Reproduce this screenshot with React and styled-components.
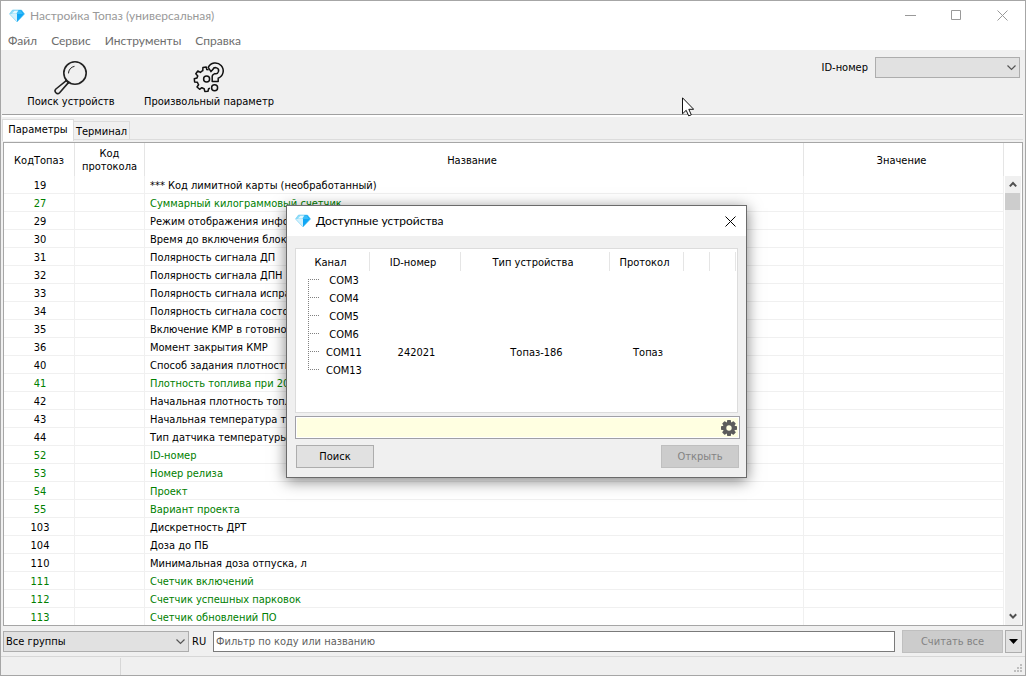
import React from "react";
import styled, { createGlobalStyle } from "styled-components";

const GlobalStyle = createGlobalStyle`
  * {
    box-sizing: border-box;
  }
  body {
    margin: 0;
    background: #f0f0f0;
  }
  body, button, input, select, table {
    font-family: "DejaVu Sans Condensed", "DejaVu Sans", Tahoma, sans-serif;
    font-size: 11px;
    line-height: 13px;
    color: #000;
  }
  button {
    padding: 0;
    margin: 0;
    border: none;
    background: none;
  }
`;

const Window = styled.div`
  position: relative;
  display: flex;
  flex-direction: column;
  height: 100vh;
  border: 1px solid #a6a6a6;
  background: #f0f0f0;
  overflow: hidden;
`;

const TitleBar = styled.header`
  display: flex;
  align-items: center;
  flex: none;
  height: ${(props) => (props.$dialog ? "30px" : "29px")};
  padding-left: 8px;
  background: #fff;
`;

const Title = styled.h1`
  flex: 1;
  margin: 0 0 0 5px;
  font: 12px/16px Lato, "Open Sans", sans-serif;
  color: ${(props) => (props.$active ? "#000" : "#999")};
`;

const WindowButton = styled.button`
  display: flex;
  align-items: center;
  justify-content: center;
  width: ${(props) => (props.$small ? "32px" : "46px")};
  height: 29px;
  color: ${(props) => (props.$small ? "#000" : "#999")};
`;

const MenuBar = styled.nav`
  display: flex;
  flex: none;
  gap: 14px;
  height: 20px;
  padding: 2px 0 0 7px;
  background: #fff;
`;

const MenuItem = styled.button`
  font: 12px/18px Lato, "Open Sans", sans-serif;
  color: #6d6d6d;
`;

const Toolbar = styled.div`
  display: flex;
  align-items: flex-start;
  flex: none;
  height: 67px;
  margin: 0 2px 0 1px;
  border-bottom: 2px solid #fff;
  box-shadow: inset 0 -1px 0 #a0a0a0;
`;

const ToolButton = styled.button`
  display: flex;
  flex-direction: column;
  align-items: center;
  width: 138px;
  padding-top: 11px;
`;

const DeviceField = styled.label`
  display: flex;
  align-items: center;
  gap: 7px;
  margin: 7px 3px 0 auto;
`;

const SelectBox = styled.span`
  position: relative;
  display: block;
  width: ${(props) => props.$width};
  height: 21px;

  svg {
    position: absolute;
    top: 7px;
    right: 4px;
    pointer-events: none;
  }
`;

const Select = styled.select`
  width: 100%;
  height: 21px;
  padding: 0 20px 0 2px;
  border: 1px solid #adadad;
  border-radius: 0;
  background: #e1e1e1;
  appearance: none;
`;

const Tabs = styled.div`
  display: flex;
  align-items: flex-end;
  flex: none;
  height: 25px;
  margin: 0 2px 0 1px;
  box-shadow: inset 0 -2px 0 #f0f0f0, inset 0 -3px 0 #dcdcdc;
`;

const Tab = styled.button`
  height: ${(props) => (props.$active ? "22px" : "19px")};
  margin-bottom: ${(props) => (props.$active ? "1px" : "2px")};
  width: ${(props) => (props.$active ? "72px" : "56px")};
  padding: ${(props) => (props.$active ? "0 0 2px" : "2px 0 0")};
  border: 1px solid #dcdcdc;
  border-left-width: ${(props) => (props.$active ? "1px" : "0")};
  border-bottom: ${(props) => (props.$active ? "none" : "1px solid #dcdcdc")};
  background: ${(props) => (props.$active ? "#fff" : "#f0f0f0")};
`;

const GridPane = styled.main`
  display: flex;
  flex: 1;
  min-height: 0;
  margin: 0 2px;
  border: 1px solid #a6a6a6;
  background: #fff;
  overflow: hidden;
`;

const GridScroller = styled.div`
  flex: 1;
  min-width: 0;
  overflow: hidden;
`;

const ParamTable = styled.table`
  width: 100%;
  table-layout: fixed;
  border-collapse: separate;
  border-spacing: 0;
`;

const Th = styled.th`
  width: ${(props) => props.$width};
  height: 33px;
  padding: ${(props) => (props.$code ? "1px 0 0" : "1px 4px 0 0")};
  border-right: 1px solid #e5e5e5;
  font-weight: normal;
  text-align: center;
`;

const Td = styled.td`
  height: 18px;
  padding: ${(props) => (props.$left ? "1px 0 0 5px" : "1px 0 0 2px")};
  border-right: 1px solid #f0f0f0;
  border-bottom: 1px solid #f0f0f0;
  color: ${(props) => (props.$readonly ? "#008000" : "#000")};
  text-align: ${(props) => (props.$left ? "left" : "center")};
  white-space: nowrap;
  overflow: hidden;
`;

const ScrollBar = styled.div`
  display: flex;
  flex-direction: column;
  width: 16px;
  margin: 33px 1px 0 1px;
  background: #f0f0f0;
`;

const ScrollArrow = styled.button`
  display: flex;
  align-items: center;
  justify-content: center;
  height: 17px;
`;

const ScrollThumb = styled.div`
  width: 15px;
  height: 17px;
  margin-bottom: auto;
  background: #cdcdcd;
`;

const FilterBar = styled.form`
  display: flex;
  align-items: center;
  flex: none;
  height: 30px;
  padding: 0 3px 0 2px;
`;

const FilterLabel = styled.label`
  width: 24px;
  padding-left: 3px;
`;

const FilterInput = styled.input`
  flex: 1;
  min-width: 0;
  height: 21px;
  margin-right: 7px;
  padding: 0 2px;
  border: 1px solid #7a7a7a;
  border-radius: 0;
  background: #fff;

  &::placeholder {
    color: #5f5f5f;
    opacity: 1;
  }
`;

const PushButton = styled.button`
  display: flex;
  align-items: center;
  justify-content: center;
  width: ${(props) => props.$width};
  height: 23px;
  border: 1px solid #adadad;
  background: #e1e1e1;

  &:disabled {
    border-color: #bfbfbf;
    background: #ccc;
    color: #838383;
  }

  & + & {
    margin-left: 2px;
  }
`;

const StatusBar = styled.footer`
  display: flex;
  align-items: flex-end;
  flex: none;
  height: 19px;
  border-top: 1px solid #d7d7d7;
`;

const StatusPanel = styled.div`
  width: 120px;
  height: 17px;
  margin-right: auto;
  border-right: 1px solid #d7d7d7;
`;

const Dialog = styled.section`
  position: absolute;
  top: 204px;
  left: 285px;
  width: 461px;
  border: 1px solid #6b6b6b;
  background: #f0f0f0;
  box-shadow: 0 3px 14px rgba(0, 0, 0, 0.5);
`;

const DialogBody = styled.div`
  padding: 12px 6px 9px 8px;
`;

const DeviceList = styled.div`
  height: 165px;
  margin-right: 2px;
  padding: 3px 1px 0 0;
  border: 1px solid #dcdcdc;
  background: #fff;
`;

const DeviceTable = styled(ParamTable)`
  td {
    height: 18px;
    padding: 0 0 0 2px;
    text-align: center;
  }
`;

const DeviceTh = styled(Th)`
  height: 19px;
  padding: 2px 4px 0 0;
`;

const Channel = styled.div`
  display: flex;
  align-items: center;
  padding: 0 2px 0 8px;
`;

const ChannelName = styled.span`
  flex: 1;
`;

const AddressRow = styled.div`
  display: flex;
  align-items: center;
  height: 23px;
  margin: 3px 0 6px;
  padding: 1px;
  border: 1px solid #a0a0a6;
  background: #fff;
`;

const AddressInput = styled.input`
  flex: 1;
  min-width: 0;
  height: 19px;
  border: none;
  outline: none;
  background: transparent;
`;

const AddressInner = styled.div`
  display: flex;
  align-items: center;
  flex: 1;
  height: 19px;
  padding-right: 1px;
  background: #ffffe1;
`;

const IconButton = styled.button`
  display: flex;
`;

const DialogButtons = styled.div`
  display: flex;
  justify-content: space-between;
  padding: 0 1px;
`;

const Cursor = styled.svg`
  position: absolute;
  top: 96px;
  left: 681px;
`;

const Logo = () => (
  <svg width="16" height="14" viewBox="0 0 16 14" aria-hidden="true">
    <path d="M3.5 1h9L15.5 5 8 13 .5 5z" fill="#d3f1fd" />
    <path d="M3.5 1h9L15.5 5H.5z" fill="#8edcf8" />
    <path d="M5.5 1.8h4L7 4.4H3z" fill="#e6f8ff" />
    <path d="M9.5 1h3L15.5 5 8 13V5z" fill="#0fa6f5" />
    <path d="M9 2h3l2 3H8z" fill="#39bdf9" />
    <path d="M3.5 1h9L15.5 5 8 13 .5 5z" fill="none" stroke="#6bcdf4" strokeWidth=".6" />
  </svg>
);

const CloseIcon = () => (
  <svg width="11" height="11" viewBox="0 0 11 11" aria-hidden="true">
    <path d="M.5.5l10 10M10.5.5l-10 10" stroke="currentColor" fill="none" />
  </svg>
);

const Chevron = () => (
  <svg width="9" height="7" viewBox="0 0 9 7" aria-hidden="true">
    <path d="M.5 1.5l4 4 4-4" stroke="#555" strokeWidth="1.2" fill="none" />
  </svg>
);

const SearchIcon = () => (
  <svg width="34" height="34" viewBox="0 0 34 34" fill="none" stroke="#222" aria-hidden="true">
    <circle cx="21" cy="12" r="11.2" strokeWidth="1.6" />
    <path d="M14.5 12a6.7 6.7 0 0 1 5.6-6.6" strokeWidth="1" strokeLinecap="round" />
    <path
      d="M12.6 19.4L1.9 28a2.5 2.5 0 0 0 3.7 3.7L14.6 21.4"
      strokeWidth="1.6"
      strokeLinejoin="round"
    />
    <path d="M11.4 18.8l3.6 3.8" strokeWidth="1.4" />
  </svg>
);

const GearQuestionIcon = () => (
  <svg width="34" height="34" viewBox="0 0 34 34" fill="none" stroke="#111" strokeWidth="1.5" strokeLinejoin="round" aria-hidden="true">
    <path d="M16.6 8.8L14.8 8.6 14.2 6 10.9 6.6 10.8 9.7A9 9 0 0 0 8.4 11.4L5.8 10 3.8 12.7 5.8 14.9A9 9 0 0 0 5 17L2.3 17.8 2.6 21 5.4 21.3A9 9 0 0 0 6.6 23.7L5 26 7.6 28.3 9.8 26.7A9 9 0 0 0 12.2 27.8L12.8 30.4 16 30.3 16.6 27.8 18 27.3" />
    <circle cx="14.6" cy="18" r="3" />
    <path d="M16.2 6.4A7.9 7.9 0 1 1 26.2 17.2V20.6H20.2V15.6Q20.2 13.6 22.8 12.6A3 3 0 1 0 20.8 8.6L19 10.6 16.2 6.4Z" />
    <circle cx="22.6" cy="26.8" r="3" />
  </svg>
);

const CogIcon = () => (
  <svg width="16" height="16" viewBox="0 0 16 16" fill="#5c5c5c" aria-hidden="true">
    {[0, 45, 90, 135].map((angle) => (
      <rect key={angle} x="6" y="0" width="4" height="16" rx=".8" transform={`rotate(${angle} 8 8)`} />
    ))}
    <circle cx="8" cy="8" r="6.2" />
    <circle cx="8" cy="8" r="2.7" fill="#ffffe1" />
  </svg>
);

const ScrollIcon = ({ down }) => (
  <svg width="8" height="7" viewBox="0 0 8 7" aria-hidden="true">
    <path d={down ? "M.8 1.2L4 4.6 7.2 1.2" : "M.8 5.4L4 2 7.2 5.4"} stroke="#505050" strokeWidth="2" fill="none" />
  </svg>
);

// dotted connector to the left of a port name
const TreeBranch = ({ first, last }) => (
  <svg width="14" height="18" viewBox="0 0 14 18" stroke="#808080" strokeDasharray="1 1" aria-hidden="true">
    <path d={`M2.5 ${first ? 8 : 0}V${last ? 9 : 18}`} />
    <path d="M2 8.5H14" />
  </svg>
);

const params = [
  ["19", "*** Код лимитной карты (необработанный)"],
  ["27", "Суммарный килограммовый счетчик", true],
  ["29", "Режим отображения информации"],
  ["30", "Время до включения блокировки"],
  ["31", "Полярность сигнала ДП"],
  ["32", "Полярность сигнала ДПН"],
  ["33", "Полярность сигнала исправности"],
  ["34", "Полярность сигнала состояния"],
  ["35", "Включение КМР в готовности"],
  ["36", "Момент закрытия КМР"],
  ["40", "Способ задания плотности"],
  ["41", "Плотность топлива при 20 °C", true],
  ["42", "Начальная плотность топлива"],
  ["43", "Начальная температура топлива"],
  ["44", "Тип датчика температуры"],
  ["52", "ID-номер", true],
  ["53", "Номер релиза", true],
  ["54", "Проект", true],
  ["55", "Вариант проекта", true],
  ["103", "Дискретность ДРТ"],
  ["104", "Доза до ПБ"],
  ["110", "Минимальная доза отпуска, л"],
  ["111", "Счетчик включений", true],
  ["112", "Счетчик успешных парковок", true],
  ["113", "Счетчик обновлений ПО", true],
];

const devices = [
  { port: "COM3" },
  { port: "COM4" },
  { port: "COM5" },
  { port: "COM6" },
  { port: "COM11", id: "242021", type: "Топаз-186", protocol: "Топаз" },
  { port: "COM13" },
];

const DeviceDialog = () => (
  <Dialog role="dialog" aria-labelledby="dialog-title">
    <TitleBar $dialog>
      <Logo />
      <Title as="h2" id="dialog-title" $active>
        Доступные устройства
      </Title>
      <WindowButton $small aria-label="Закрыть">
        <CloseIcon />
      </WindowButton>
    </TitleBar>
    <DialogBody>
      <DeviceList>
        <DeviceTable>
          <thead>
            <tr>
              <DeviceTh $width="74px">Канал</DeviceTh>
              <DeviceTh $width="91px">ID-номер</DeviceTh>
              <DeviceTh>Тип устройства</DeviceTh>
              <DeviceTh $width="74px">Протокол</DeviceTh>
              <DeviceTh $width="26px" />
              <DeviceTh $width="26px" />
            </tr>
          </thead>
          <tbody>
            {devices.map((device, i) => (
              <tr key={device.port}>
                <td>
                  <Channel>
                    <TreeBranch first={i === 0} last={i === devices.length - 1} />
                    <ChannelName>{device.port}</ChannelName>
                  </Channel>
                </td>
                <td>{device.id}</td>
                <td>{device.type}</td>
                <td>{device.protocol}</td>
                <td />
                <td />
              </tr>
            ))}
          </tbody>
        </DeviceTable>
      </DeviceList>
      <AddressRow>
        <AddressInner>
          <AddressInput aria-label="Состояние поиска" />
          <IconButton aria-label="Настройки">
            <CogIcon />
          </IconButton>
        </AddressInner>
      </AddressRow>
      <DialogButtons>
        <PushButton $width="78px">Поиск</PushButton>
        <PushButton $width="78px" disabled>
          Открыть
        </PushButton>
      </DialogButtons>
    </DialogBody>
  </Dialog>
);

export default function App() {
  return (
    <>
      <GlobalStyle />
      <Window>
        <TitleBar>
          <Logo />
          <Title>Настройка Топаз (универсальная)</Title>
          <WindowButton aria-label="Свернуть">
            <svg width="11" height="11" aria-hidden="true">
              <path d="M0 5.5h11" stroke="currentColor" />
            </svg>
          </WindowButton>
          <WindowButton aria-label="Развернуть">
            <svg width="11" height="11" aria-hidden="true">
              <path d="M.5.5h9v9h-9z" stroke="currentColor" fill="none" />
            </svg>
          </WindowButton>
          <WindowButton aria-label="Закрыть">
            <CloseIcon />
          </WindowButton>
        </TitleBar>
        <MenuBar>
          <MenuItem>Файл</MenuItem>
          <MenuItem>Сервис</MenuItem>
          <MenuItem>Инструменты</MenuItem>
          <MenuItem>Справка</MenuItem>
        </MenuBar>
        <Toolbar>
          <ToolButton>
            <SearchIcon />
            Поиск устройств
          </ToolButton>
          <ToolButton>
            <GearQuestionIcon />
            Произвольный параметр
          </ToolButton>
          <DeviceField>
            ID-номер
            <SelectBox $width="145px">
              <Select />
              <Chevron />
            </SelectBox>
          </DeviceField>
        </Toolbar>
        <Tabs role="tablist">
          <Tab role="tab" aria-selected="true" $active>
            Параметры
          </Tab>
          <Tab role="tab" aria-selected="false">
            Терминал
          </Tab>
        </Tabs>
        <GridPane>
          <GridScroller>
            <ParamTable>
              <thead>
                <tr>
                  <Th $width="71px" $code>
                    КодТопаз
                  </Th>
                  <Th $width="70px" $code>
                    Код протокола
                  </Th>
                  <Th>Название</Th>
                  <Th $width="200px">Значение</Th>
                </tr>
              </thead>
              <tbody>
                {params.map(([code, name, readonly]) => (
                  <tr key={code}>
                    <Td $readonly={readonly}>{code}</Td>
                    <Td />
                    <Td $left $readonly={readonly}>
                      {name}
                    </Td>
                    <Td />
                  </tr>
                ))}
              </tbody>
            </ParamTable>
          </GridScroller>
          <ScrollBar>
            <ScrollArrow aria-label="Вверх">
              <ScrollIcon />
            </ScrollArrow>
            <ScrollThumb />
            <ScrollArrow aria-label="Вниз">
              <ScrollIcon down />
            </ScrollArrow>
          </ScrollBar>
        </GridPane>
        <FilterBar onSubmit={(e) => e.preventDefault()}>
          <SelectBox $width="186px">
            <Select aria-label="Группа">
              <option>Все группы</option>
            </Select>
            <Chevron />
          </SelectBox>
          <FilterLabel htmlFor="filter">RU</FilterLabel>
          <FilterInput id="filter" placeholder="Фильтр по коду или названию" />
          <PushButton type="button" $width="101px" disabled>
            Считать все
          </PushButton>
          <PushButton type="button" $width="17px" aria-label="Ещё">
            <svg width="9" height="5" aria-hidden="true">
              <path d="M0 0h9L4.5 5z" />
            </svg>
          </PushButton>
        </FilterBar>
        <StatusBar>
          <StatusPanel />
          <svg width="11" height="11" fill="#bfbfbf" aria-hidden="true">
            <path d="M6 0h2v2H6zM6 3h2v2H6zM3 3h2v2H3zM6 6h2v2H6zM3 6h2v2H3zM0 6h2v2H0z" />
          </svg>
        </StatusBar>
        <DeviceDialog />
        <Cursor width="12" height="20" viewBox="0 0 12 20" aria-hidden="true">
          <path d="M.5.8v16l3.7-3.5 2.5 5.6 2.6-1.1-2.5-5.5h4.9z" fill="#fff" stroke="#111" />
        </Cursor>
      </Window>
    </>
  );
}
